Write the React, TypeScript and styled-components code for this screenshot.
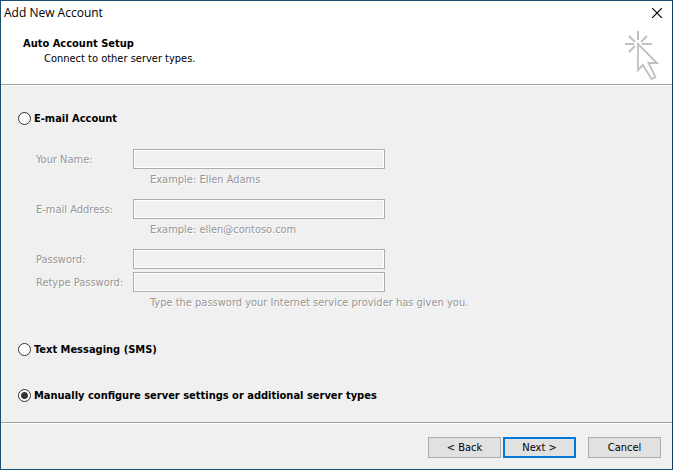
import React, { useId, useState } from "react";
import styled, { createGlobalStyle, css } from "styled-components";

const GlobalStyle = createGlobalStyle`
  *, *::before, *::after { box-sizing: border-box; }
  html, body, #root { height: 100%; }
  body {
    margin: 0;
    background: #f0f0f0;
    font-family: Tahoma, "DejaVu Sans Condensed", "Noto Sans", sans-serif;
    font-size: 11px;
    line-height: 14px;
    color: #000;
  }
`;

const Dialog = styled.form`
  display: flex;
  flex-direction: column;
  min-height: 100%;
  border: 1px solid #1b4f72;
  border-right-color: #17406b;
  background: #f0f0f0;
`;

const TitleBar = styled.header`
  display: flex;
  align-items: center;
  justify-content: space-between;
  height: 24px;
  padding: 0 5px 0 3px;
  background: #fff;
`;

const Title = styled.h1`
  margin: 0;
  font: 400 12px/16px "Segoe UI", "Open Sans", "Noto Sans", sans-serif;
`;

const CloseButton = styled.button`
  display: flex;
  padding: 5px;
  border: 0;
  background: none;
`;

const Banner = styled.section`
  display: flex;
  justify-content: space-between;
  height: 59px;
  padding: 5px 12px 0 22px;
  background: #fff;
`;

const BannerTitle = styled.h2`
  margin: 7px 0 1px;
  font-size: 11px;
  line-height: 14px;
`;

const BannerText = styled.p`
  margin: 0 0 0 21px;
`;

const Divider = styled.hr`
  width: 100%;
  height: 2px;
  margin: 0;
  border: 0;
  border-top: 1px solid #a0a0a0;
  background: #fff;
`;

const Body = styled.main`
  flex: 1;
  display: flex;
  flex-direction: column;
  padding: 24px 17px 18px;
`;

const Option = styled.label`
  display: flex;
  align-items: center;
  gap: 3px;
  height: 16px;
  font-weight: 700;

  & + & { margin-top: 30px; }
`;

const OptionText = styled.span`
  padding-top: 2px;
`;

const Radio = styled.input`
  appearance: none;
  flex: none;
  width: 13px;
  height: 13px;
  margin: 0;
  border: 1px solid #333;
  border-radius: 50%;
  background: #fff;

  &:checked {
    background: radial-gradient(circle, #333 3px, #fff 4px);
  }
`;

const Fields = styled.fieldset`
  display: flex;
  flex-direction: column;
  gap: 14px;
  margin: 23px 0 33px;
  padding: 0 0 0 18px;
  border: 0;
  min-width: 0;
  color: #969696;
  text-shadow: 1px 1px 0 #fff;
`;

const FieldRow = styled.div`
  display: grid;
  grid-template-columns: 97px minmax(0, 252px);
  align-items: center;

  & + & { margin-top: 3px; }
`;

const FieldLabel = styled.label`
  padding-top: 2px;
`;

const TextBox = styled.input`
  width: 100%;
  height: 20px;
  padding: 0 3px;
  border: 1px solid #abadb3;
  border-radius: 0;
  background: #f0f0f0;
  box-shadow: inset 0 0 0 1px #fff;
  font: inherit;
`;

const Hint = styled.p`
  margin: 0 0 0 114px;
  padding-top: 5px;
  line-height: 11px;
`;

const Footer = styled.footer`
  display: flex;
  justify-content: flex-end;
  gap: 2px;
  padding: 13px 11px 11px;
`;

const PushButton = styled.button<{ $primary?: boolean; $apart?: boolean }>`
  width: 73px;
  height: 21px;
  padding: 0;
  border: 1px solid #adadad;
  background: #e1e1e1;
  color: #000;
  font: inherit;
  ${(p) => p.$primary && css`border: 2px solid #0078d7;`}
  ${(p) => p.$apart && css`margin-left: 10px;`}
`;

const CloseIcon = () => (
  <svg width="10" height="10" viewBox="0 0 10 10" aria-hidden="true">
    <path d="M0 0l10 10M10 0L0 10" stroke="#000" strokeWidth="1.2" />
  </svg>
);

const PointerIcon = () => (
  <svg width="36" height="52" viewBox="0 0 36 52" fill="none" stroke="#c0c0c0" strokeWidth="2" aria-hidden="true">
    <path d="M14 1v9M1 14h9M18 14h10M5 6l6 6M23 6l-6 6M5 22l6-6" />
    <path d="M14 14v26l5-5 8.500 14 4-2-7-14h8.500z" strokeWidth="1.800" />
  </svg>
);

interface FieldProps {
  label: string;
  type?: string;
}

function Field({ label, type = "text" }: FieldProps) {
  const id = useId();
  return (
    <FieldRow>
      <FieldLabel htmlFor={id}>{label}</FieldLabel>
      <TextBox id={id} type={type} />
    </FieldRow>
  );
}

type Mode = "email" | "sms" | "manual";

export default function App() {
  const [mode, setMode] = useState<Mode>("manual");

  const option = (value: Mode, text: string) => (
    <Option>
      <Radio type="radio" name="mode" checked={mode === value} onChange={() => setMode(value)} />
      <OptionText>{text}</OptionText>
    </Option>
  );

  return (
    <>
      <GlobalStyle />
      <Dialog onSubmit={(e) => e.preventDefault()}>
        <TitleBar>
          <Title>Add New Account</Title>
          <CloseButton type="button" aria-label="Close"><CloseIcon /></CloseButton>
        </TitleBar>
        <Banner>
          <div>
            <BannerTitle>Auto Account Setup</BannerTitle>
            <BannerText>Connect to other server types.</BannerText>
          </div>
          <PointerIcon />
        </Banner>
        <Divider />
        <Body>
          {option("email", "E-mail Account")}
          <Fields disabled={mode !== "email"}>
            <div>
              <Field label="Your Name:" />
              <Hint>Example: Ellen Adams</Hint>
            </div>
            <div>
              <Field label="E-mail Address:" />
              <Hint>Example: ellen@contoso.com</Hint>
            </div>
            <div>
              <Field label="Password:" type="password" />
              <Field label="Retype Password:" type="password" />
              <Hint>Type the password your Internet service provider has given you.</Hint>
            </div>
          </Fields>
          {option("sms", "Text Messaging (SMS)")}
          {option("manual", "Manually configure server settings or additional server types")}
        </Body>
        <Divider />
        <Footer>
          <PushButton type="button">&lt; Back</PushButton>
          <PushButton type="submit" $primary>Next &gt;</PushButton>
          <PushButton type="button" $apart>Cancel</PushButton>
        </Footer>
      </Dialog>
    </>
  );
}
